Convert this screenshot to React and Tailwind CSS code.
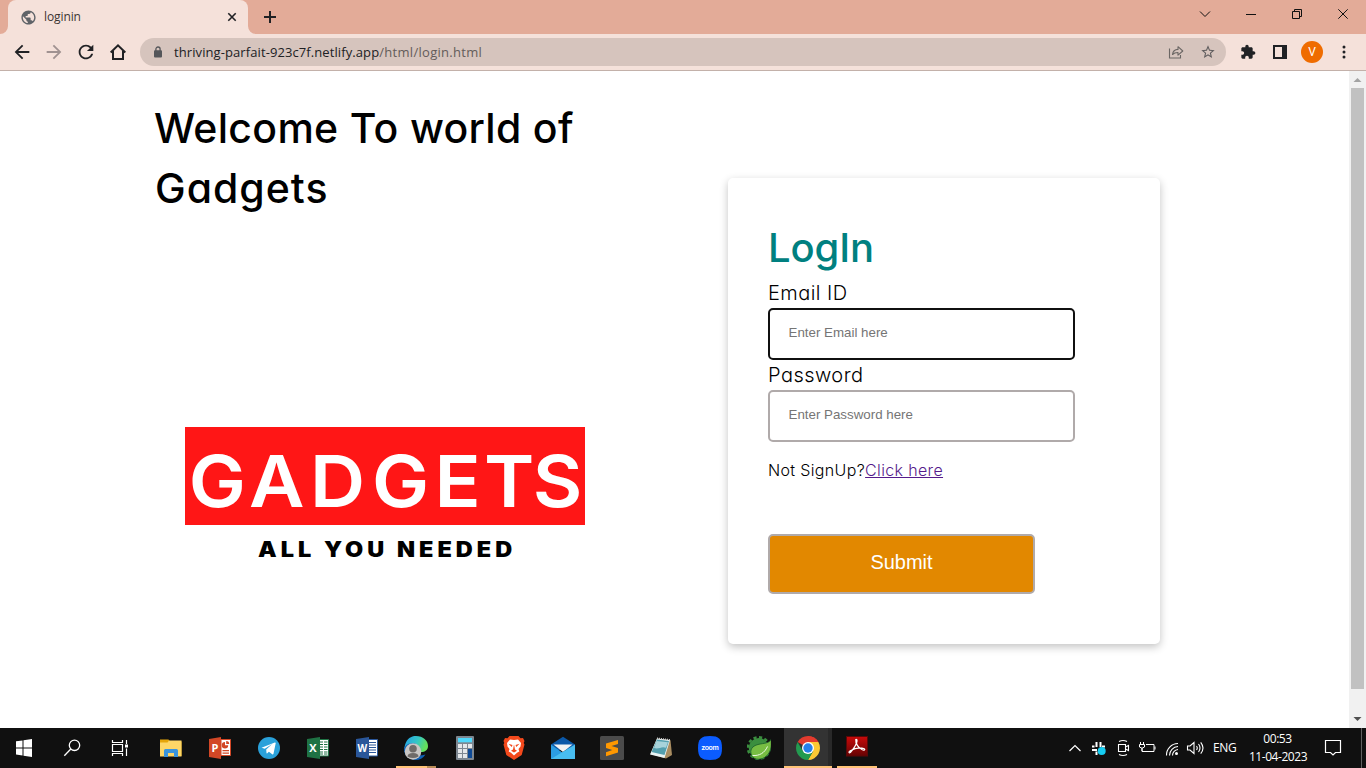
const ui = "font-['Open_Sans','Noto_Sans',sans-serif]";
const geo = "font-['Inter',sans-serif] [font-feature-settings:'cv11']";

function Glyph({ d, size, color = '#202124' }) {
  return (
    <svg width={size} height={size} viewBox="0 0 24 24" fill={color} className="shrink-0">
      <path d={d} />
    </svg>
  );
}

const BACK = 'M20 11H7.83l5.59-5.59L12 4l-8 8 8 8 1.41-1.41L7.83 13H20v-2z';
const FORWARD = 'M4 11h12.17l-5.59-5.59L12 4l8 8-8 8-1.41-1.41L16.17 13H4v-2z';
const RELOAD =
  'M17.65 6.35C16.2 4.9 14.21 4 12 4c-4.42 0-7.99 3.58-7.99 8s3.57 8 7.99 8c3.73 0 6.84-2.55 7.73-6h-2.08c-.82 2.33-3.04 4-5.65 4-3.31 0-6-2.69-6-6s2.69-6 6-6c1.66 0 3.14.69 4.22 1.78L13 11h7V4l-2.35 2.35z';
const PUZZLE =
  'M20.5 11H19V7c0-1.1-.9-2-2-2h-4V3.5C13 2.12 11.88 1 10.5 1S8 2.12 8 3.5V5H4c-1.1 0-1.99.9-1.99 2v3.8H3.5c1.49 0 2.7 1.21 2.7 2.7s-1.21 2.7-2.7 2.7H2V20c0 1.1.9 2 2 2h3.8v-1.5c0-1.49 1.21-2.7 2.7-2.7 1.49 0 2.7 1.21 2.7 2.7V22H17c1.1 0 2-.9 2-2v-4h1.5c1.38 0 2.5-1.12 2.5-2.5S21.88 11 20.5 11z';
const STAR =
  'M22 9.24l-7.19-.62L12 2 9.19 8.63 2 9.24l5.46 4.73L5.82 21 12 17.27 18.18 21l-1.63-7.03L22 9.24zM12 15.4l-3.76 2.27 1-4.28-3.32-2.88 4.38-.38L12 6.1l1.71 4.04 4.38.38-3.32 2.88 1 4.28L12 15.4z';
const GLOBE =
  'M12 2C6.48 2 2 6.48 2 12s4.48 10 10 10 10-4.48 10-10S17.52 2 12 2zm-1 17.93c-3.95-.49-7-3.85-7-7.93 0-.62.08-1.21.21-1.79L9 15v1c0 1.1.9 2 2 2v1.93zm6.9-2.54c-.26-.81-1-1.39-1.9-1.39h-1v-3c0-.55-.45-1-1-1H8v-2h2c.55 0 1-.45 1-1V7h2c1.1 0 2-.9 2-2v-.41c2.93 1.19 5 4.06 5 7.41 0 2.08-.8 3.97-2.1 5.39z';

function Cell({ children, className = '' }) {
  return <div className={`flex w-8 shrink-0 items-center justify-center ${className}`}>{children}</div>;
}

function TabStrip() {
  return (
    <div className="flex h-[34px] bg-[#e3ab98]">
      <svg width="8" height="34" viewBox="0 0 8 34" className="shrink-0">
        <path d="M8 26a8 8 0 0 1-8 8h8z" fill="#f5e1da" />
      </svg>
      <div className="flex h-[34px] w-60 shrink-0 items-center rounded-t-lg bg-[#f5e1da] pl-3">
        <Glyph d={GLOBE} size={17} color="#5f6368" />
        <span className={`${ui} ml-[7px] w-[178px] text-[12px] tracking-[-0.1px] text-[#3c3533]`}>loginin</span>
        <svg width="20" height="20" viewBox="0 0 20 20" className="shrink-0">
          <path d="M6.3 6.3l7.4 7.4M13.7 6.3l-7.4 7.4" stroke="#202124" strokeWidth="1.6" />
        </svg>
      </div>
      <svg width="8" height="34" viewBox="0 0 8 34" className="shrink-0">
        <path d="M0 26a8 8 0 0 0 8 8h-8z" fill="#f5e1da" />
      </svg>
      <svg width="28" height="34" viewBox="0 0 28 34" className="shrink-0">
        <path d="M8 17h12M14 11v12" stroke="#202124" strokeWidth="2" />
      </svg>
      <div className="flex-1" />
      <svg width="184" height="28" viewBox="1182 0 184 28" className="shrink-0" fill="none" stroke="#111">
        <path d="M1200 11.5l5 5 5-5" />
        <path d="M1246 14.5h10" />
        <path d="M1292.5 11.5h7v7h-7zM1294.5 11v-1.500h7v7h-2" />
        <path d="M1338.300 9.300l9.400 9.400M1347.700 9.300l-9.400 9.400" />
      </svg>
    </div>
  );
}

function Toolbar() {
  return (
    <div className="flex h-[37px] items-center border-b border-[#c3b1aa] bg-[#f5e1da] pl-1.5">
      <Cell><Glyph d={BACK} size={22} /></Cell>
      <Cell><Glyph d={FORWARD} size={22} color="#a09291" /></Cell>
      <Cell><Glyph d={RELOAD} size={22} /></Cell>
      <Cell>
        <svg width="18" height="18" viewBox="0 0 18 18" fill="none" stroke="#202124" strokeWidth="2">
          <path d="M1.700 9.500L9 2.300l7.300 7.200M4 8v8h10V8" />
        </svg>
      </Cell>
      <div className="ml-1.5 mr-1.5 flex h-7 flex-1 items-center rounded-full bg-[#d6c4bd] pl-[13px] pr-0.5">
        <svg width="10" height="12" viewBox="0 0 10 12" className="shrink-0">
          <rect x="1" y="4.200" width="8" height="7.300" rx="1" fill="#54565a" />
          <path d="M2.900 5V3.100a2.100 2.100 0 0 1 4.200 0V5" fill="none" stroke="#54565a" strokeWidth="1.300" />
        </svg>
        <span className={`${ui} ml-[11px] flex-1 whitespace-nowrap pt-px text-[13px] tracking-[0.09px] text-[#202124]`}>
          thriving-parfait-923c7f.netlify.app<span className="tracking-[0.3px] text-[#645c5a]">/html/login.html</span>
        </span>
        <Cell>
          <svg width="16" height="16" viewBox="0 0 16 16" fill="none" stroke="#6b6664" strokeWidth="1.100">
            <path d="M1.500 4.500v9.500h11v-3" />
            <path d="M4.500 10.500c.4-3.500 2.300-5 5.500-5.100V2.700l4.800 4.300-4.800 4.200V8.500c-2.500-.1-4 .5-5.500 2z" strokeLinejoin="round" />
          </svg>
        </Cell>
        <Cell><Glyph d={STAR} size={16} color="#5f5c5d" /></Cell>
      </div>
      <Cell><Glyph d={PUZZLE} size={16} /></Cell>
      <Cell>
        <svg width="14" height="14" viewBox="0 0 14 14">
          <path fillRule="evenodd" fill="#202124" d="M0 0h14v14H0zM2 2v10h7V2z" />
        </svg>
      </Cell>
      <Cell>
        <div className="flex size-[22px] items-center justify-center rounded-full bg-[#ef6c00] font-['Roboto',sans-serif] text-[12px] text-white">V</div>
      </Cell>
      <Cell className="mr-1.5">
        <svg width="4" height="14" viewBox="0 0 4 14" fill="#202124">
          <circle cx="2" cy="2" r="1.500" /><circle cx="2" cy="7" r="1.500" /><circle cx="2" cy="12" r="1.500" />
        </svg>
      </Cell>
    </div>
  );
}

function Scrollbar() {
  return (
    <div className="flex w-[17px] shrink-0 flex-col items-center bg-[#f1f1f1]">
      <svg width="17" height="17" viewBox="0 0 17 17"><path d="M8.500 7l4 4h-8z" fill="#a3a3a3" /></svg>
      <div className="w-[13px] flex-1 bg-[#c1c1c1]" />
      <div className="h-[22px]" />
      <svg width="17" height="17" viewBox="0 0 17 17"><path d="M4.500 6h8l-4 4z" fill="#505050" /></svg>
    </div>
  );
}

function Brand() {
  return (
    <svg width="400" height="150" viewBox="185 427 400 150" className="ml-[30px]">
      <rect x="185" y="427" width="400" height="98" fill="#ff1616" />
      <g transform="translate(185 507) scale(1.060 1)">
        <text x="3.500 60.500 118 176.500 235.500 282 328" y="0" fontFamily="Inter, sans-serif" fontWeight="600" fontSize="72" fill="#fff">GADGETS</text>
      </g>
      <g transform="translate(258 557) scale(1.120 1)">
        <text fontFamily="Inter, sans-serif" fontWeight="900" fontSize="21" textLength="227" fill="#000">ALL YOU NEEDED</text>
      </g>
    </svg>
  );
}

function Field({ label, placeholder, type, border }) {
  return (
    <label className="block">
      <span className="block h-[30px] text-[20px] font-light leading-[30px] tracking-[0.45px]">{label}</span>
      <input
        type={type}
        placeholder={placeholder}
        className={`block h-[52px] w-[307px] rounded-[5px] border-2 bg-white pb-[3px] pl-[18.5px] font-['Liberation_Sans',Arial,sans-serif] text-[13.333px] outline-none placeholder:text-[#757575] ${border}`}
      />
    </label>
  );
}

function LoginPage() {
  return (
    <div className={`${geo} flex min-w-0 flex-1 bg-white text-black`}>
      <section className="ml-[155px] w-[573px] shrink-0 pt-[27px]">
        <h1 className="w-[460px] -indent-px text-[41px] font-medium leading-[60px] tracking-[0.3px]">
          Welcome To world of<br /><span className="tracking-[1px]">Gadgets</span>
        </h1>
        <div className="mt-[209px]">
          <Brand />
        </div>
      </section>
      <section className="mt-[107px] h-[466px] w-[432px] rounded-[5px] bg-white p-10 shadow-[0_3px_8px_rgba(0,0,0,0.24)]">
        <h2 className="text-[40px] font-medium leading-[60px] tracking-[-0.1px] text-[#008080]">LogIn</h2>
        <Field label="Email ID" type="email" placeholder="Enter Email here" border="border-[#101010]" />
        <Field label="Password" type="password" placeholder="Enter Password here" border="border-[#b0aaaa]" />
        <p className="mt-4 text-[16px] font-light leading-6 tracking-[0.35px]">
          Not SignUp?<a className="text-[#551a8b] underline" href="#signup">Click here</a>
        </p>
        <button className="mt-[52px] block h-[60px] w-[267px] rounded-[5px] border-2 border-[#b0aaaa] bg-[#e28800] pb-1 font-['Liberation_Sans',Arial,sans-serif] text-[20px] text-white">
          Submit
        </button>
      </section>
    </div>
  );
}

const icons = {
  start: (
    <g fill="#fff"><path d="M4 5.300l6.500-.9v7H4zM11.500 4.200L20 3v8.400h-8.500zM4 12.500h6.500v7L4 18.600zM11.500 12.500H20V21l-8.500-1.200z" /></g>
  ),
  search: (
    <g fill="none" stroke="#fff" strokeWidth="1.300"><circle cx="14.500" cy="9.300" r="5.200" /><path d="M10.800 13L4.300 19.800" /></g>
  ),
  view: (
    <g fill="none" stroke="#fff" strokeWidth="1.200">
      <path d="M4.500 4v2.500h10V4M4.500 20v-2.500h10V20M4.500 8.500h10v7h-10zM18.500 4v4M18.500 12.500V20" /><path d="M17 8.500h3v3h-3z" fill="#fff" stroke="none" />
    </g>
  ),
  folder: (
    <g>
      <path d="M1 3.500h8.500l1.500 2H22.500V20H1z" fill="#e5a50a" /><path d="M1 6.500h7.500l1.500-2h12.500V20.500H1z" fill="#fdd667" />
      <path d="M5 21v-6.500q0-1.500 1.500-1.500h11q1.500 0 1.500 1.500V21h-4v-4H9v4z" fill="#3a94dc" />
    </g>
  ),
  ppt: (
    <g>
      <path d="M13 3.500h9.500v16H13z" fill="#fff" stroke="#d24726" /><path d="M13 1L1 3v18l12 2z" fill="#d24726" />
      <path d="M17 6a3.200 3.200 0 1 0 3.200 3.200H17zM18.200 5v3h3a3 3 0 0 0-3-3zM14.500 14h6.500v1.200h-6.500zM14.500 16.500h6.500v1.200h-6.500z" fill="#d24726" />
      <text x="3.600" y="16.300" fontFamily="Open Sans, sans-serif" fontWeight="700" fontSize="11" fill="#fff">P</text>
    </g>
  ),
  telegram: (
    <g><circle cx="12" cy="12" r="11" fill="#2aa1da" /><path d="M4.500 11.700L17.800 6.500c.6-.2 1 .2.900.8l-2.200 10.400c-.2.700-.7.900-1.300.5l-3.300-2.400-1.600 1.500c-.4.400-.8.200-.8-.3l-.3-3.400 6-5.500-7.400 4.700-3.200-1c-.6-.2-.6-.3-.1-.1z" fill="#fff" /></g>
  ),
  excel: (
    <g>
      <path d="M13 3.500h9.500v16.500H13z" fill="#fff" stroke="#1f7244" />
      <path d="M14 6h7.500M14 8.500h7.500M14 11h7.500M14 13.500h7.500M14 16h7.500M14 18h7.500" stroke="#1f7244" /><path d="M17.500 4v15" stroke="#fff" />
      <path d="M14 1L1 3v18l13 2z" fill="#1f7244" />
      <text x="3.300" y="16.300" fontFamily="Open Sans, sans-serif" fontWeight="700" fontSize="11" fill="#fff">X</text>
    </g>
  ),
  word: (
    <g>
      <path d="M13 3.500h9.500v16.500H13z" fill="#fff" stroke="#2a5699" /><path d="M14 6.500h7M14 9h7M14 11.500h7M14 14h7M14 16.500h7" stroke="#2a5699" />
      <path d="M14 1L1 3v18l13 2z" fill="#2a5699" />
      <text x="2.400" y="16.300" fontFamily="Open Sans, sans-serif" fontWeight="700" fontSize="10" fill="#fff">W</text>
    </g>
  ),
  edge: (
    <g>
      <defs>
        <linearGradient id="edgeTop" x1="0" y1="0" x2="1" y2="0.300"><stop offset="0" stopColor="#239de8" /><stop offset="0.600" stopColor="#35c7c5" /><stop offset="1" stopColor="#65e05b" /></linearGradient>
      </defs>
      <path d="M1 9C3 2.500 7 0 12 0c7 0 12 4.500 12 10 0 4-3 6-7 6-3 0-3.500-1-2.500-2.500C16 11 13 8 9 8c-3 0-6 1-9 5z" fill="url(#edgeTop)" />
      <path d="M0 13c1-4 5-6 9-6 1 0 2 .2 3 .600C8 9 7 12 8 15c1.500 4 6 6 13.500 3.500C18 24 12 25 7 23 2 21 0 17 0 13z" fill="#0f5fb4" />
      <circle cx="9" cy="15.500" r="8.300" fill="#c9c6c4" /><circle cx="9" cy="12.800" r="3.800" fill="#6f6b69" />
      <path d="M3.500 20.500q0-3.500 5.500-3.500t5.500 3.500q-5.500 3-11 0z" fill="#6f6b69" />
    </g>
  ),
  calc: (
    <g>
      <rect x="3" y="0" width="18" height="24" rx="1" fill="#7d8791" /><rect x="5" y="2" width="14" height="4.300" fill="#50d8fb" />
      <g fill="#e4e7ea">
        <path d="M5 8h4v4H5zM10 8h4v4h-4zM15 8h4v4h-4zM5 13h4v4H5zM10 13h4v4h-4zM5 18h4v4H5zM10 18h4v4h-4z" />
      </g>
      <path d="M15 13h4v9h-4z" fill="#0e4a96" />
    </g>
  ),
  brave: (
    <g>
      <path d="M7.500 0h9l2 2.300 2.500-.2 1.500 3-.8 2 .8 1.500-2.800 10.400L12 24l-7.700-5L1.500 8.600l.8-1.500-.8-2 1.500-3 2.500.2z" fill="#f4491c" />
      <path d="M12 4l4-.5 3 3.500-.5 3.500-2 2.500.8 2.500-2.300 1.300L12 19.500l-3-2.700-2.300-1.300.8-2.500-2-2.500L5 7l3-3.500z" fill="#fff" />
      <path d="M6.500 7.800l4 1.200-.8 2zM17.500 7.800l-4 1.200.8 2zM12 8.500l1 5 2 1.300-3 1.700-3-1.700 2-1.300z" fill="#f4491c" />
    </g>
  ),
  mail: (
    <g>
      <path d="M0 8.500L12 .8l12 7.700V14H0z" fill="#0b58a8" /><path d="M2.500 8.500h19L12 16z" fill="#f3f3f3" />
      <path d="M0 8.500l14 10V23H0z" fill="#2b9de3" /><path d="M24 8.500V23H0z" fill="#48bdf0" />
    </g>
  ),
  sublime: (
    <g><rect width="24" height="24" rx="1.500" fill="#4b4b4b" /><path d="M6 7.600l12-3.700v4l-6.500 2.200 6.500 2v4.300L6 20.200v-4l6.300-2.200L6 12z" fill="#ff9800" /></g>
  ),
  notepad: (
    <g>
      <path d="M8 2.500l13.500 1.800L23 19l-6 3.500L1.500 18z" fill="#a98d61" /><path d="M8 2.500L21 4l-5.500 18L1 18.500z" fill="#e9f3f4" />
      <path d="M8 3.500L20 5l-4.500 14L2.500 16z" fill="#539fae" /><path d="M7.500 5L19 6.300l-2 5.500c-5-2-7 2-12 .200z" fill="#a7d3da" />
      <path d="M8 2.300l13 1.500" stroke="#c9c9c9" strokeWidth="1.600" strokeDasharray="1 1" />
    </g>
  ),
  zoom: (
    <g><path d="M12 0C21 0 24 3 24 12S21 24 12 24 0 21 0 12 3 0 12 0z" fill="#0b5cff" /><text x="12" y="14" textAnchor="middle" textLength="17.500" fontFamily="Inter, sans-serif" fontWeight="600" fontSize="7" fill="#fff">zoom</text></g>
  ),
  spring: (
    <g>
      <circle cx="11.700" cy="12" r="10" fill="#3b8f3f" /><circle cx="11.700" cy="12" r="10.800" fill="none" stroke="#3b8f3f" strokeWidth="2.400" strokeDasharray="3.200 2.450" />
      <path d="M24 3.500C22 7.500 17 7 11 8.500 5 10 2.500 14 4.500 19c1.500 4.500 8 5.500 13 2.500C24 17.500 25 10 24 3.500z" fill="#77bd43" stroke="#185c2b" strokeWidth="0.800" />
      <path d="M5.500 19.500c7 .5 12-2.500 15-9" fill="none" stroke="#effbe7" />
    </g>
  ),
  chrome: (
    <g>
      <path d="M12 12L1.610 6A12 12 0 0 1 22.390 6z" fill="#e33b2e" /><path d="M12 0a12 12 0 0 1 10.390 6H12z" fill="#e33b2e" />
      <path d="M22.390 6A12 12 0 0 1 12 24l5.200-9L12 6z" fill="#fcc934" /><path d="M1.610 6A12 12 0 0 0 12 24l5.200-9L6.800 15z" fill="#239a50" />
      <circle cx="12" cy="12" r="6" fill="#fff" /><circle cx="12" cy="12" r="4.700" fill="#2680eb" />
    </g>
  ),
  pdf: (
    <g>
      <defs><linearGradient id="pdf" x2="0" y2="1"><stop offset="0" stopColor="#c80a0a" /><stop offset="1" stopColor="#650303" /></linearGradient></defs>
      <rect x="1.500" y="0.500" width="21" height="19.500" fill="url(#pdf)" stroke="#5a0808" />
      <path d="M10.800 3.500c2.500-.8 1.500 5-5.500 13-1.500 1-2-.5 0-1.700 4-2.300 10-3.300 13.500-2.300 2 .8.500 2.200-1.500 1.300-4-2-7-6.500-6.500-10.300z" fill="none" stroke="#fff" strokeWidth="1.200" />
    </g>
  ),
};

function AppSlot({ name, state = 'idle' }) {
  const bar = { idle: '', open: 'mx-1 bg-[#ffc377]', group: 'mx-1 bg-linear-to-r from-[#ffc377] from-78% to-[#ba8d57] to-78%', active: 'bg-[#ffc377]' }[state];
  return (
    <div className={`mr-px flex h-10 w-12 shrink-0 flex-col ${state === 'active' ? 'border-r-4 border-[#292929] bg-[#333333]' : ''}`}>
      <div className="flex h-[38px] items-center justify-center pt-0.5">
        <svg width="24" height="24" viewBox="0 0 24 24" className={state === 'active' ? 'relative left-0.5 shrink-0' : 'shrink-0'}>{icons[name]}</svg>
      </div>
      <div className={`h-0.5 ${state === 'active' ? '-mr-1' : ''} ${bar}`} />
    </div>
  );
}

function Tray() {
  return (
    <div className={`${ui} flex h-10 items-center text-[12px] text-white`}>
      <svg width="142" height="40" viewBox="1064 728 142 40" fill="none" stroke="#fff" className="shrink-0">
        <path d="M1069.500 751l5.500-5.500 5.500 5.500" strokeWidth="1.200" />
        <g strokeWidth="2">
          <path d="M1096.500 742v5M1092 746.500h2.500M1100.500 742v5M1102 746.500h3M1092 750h5M1100 750h5M1096.500 751.500v3.500" />
        </g>
        <circle cx="1101.700" cy="751" r="4" fill="#15cdf2" stroke="none" />
        <path d="M1119 741.500q4-2 8 0M1119 754.500q4 2 8 0M1118.500 744.500h7v7h-7zM1125.500 747l3-1.500v5l-3-1.500" strokeWidth="1.100" />
        <path d="M1146 744.500h8v7h-12v-3M1155 746.500v3M1140.500 742v2.500M1143.500 742v2.500M1139.500 744.500h5v2.500q-2.500 2.500-5 0zM1142 748v3" />
        <g strokeWidth="1.100">
          <path d="M1166.500 755.500a11.500 11.500 0 0 1 11.500-12M1169.500 755.500a9 9 0 0 1 8.500-9M1172.500 755.500a6 6 0 0 1 5.500-6" /><circle cx="1176.500" cy="753.500" r="1.500" fill="#fff" stroke="none" />
        </g>
        <path d="M1187.500 746h2.500l4-3.500v11l-4-3.500h-2.500zM1196.500 746q1.500 2 0 4M1198.500 744q3 4 0 8M1200.700 742.300q4.600 5.700 0 11.400" strokeWidth="1.100" />
      </svg>
      <span className="ml-[7px] w-[35px] tracking-[-0.35px]">ENG</span>
      <div className="w-[60px] whitespace-nowrap text-center text-[12px] leading-[18px] tracking-[-0.45px]">
        <div className="pr-px">00:53</div>
        <div>11-04-2023</div>
      </div>
      <svg width="58" height="40" viewBox="1308 728 58 40" fill="none" stroke="#fff" className="shrink-0">
        <path d="M1325.500 740.500h15v12h-5l-2.500 2.500-2.500-2.500h-5z" strokeWidth="1.200" />
        <path d="M1361.500 728v40" stroke="#606060" />
      </svg>
    </div>
  );
}

function Taskbar() {
  const apps = ['folder', 'ppt', 'telegram', 'excel', 'word', 'edge', 'calc', 'brave', 'mail', 'sublime', 'notepad', 'zoom', 'spring', 'chrome', 'pdf'];
  const states = { edge: 'group', chrome: 'active', pdf: 'open' };
  return (
    <div className="flex h-10 shrink-0 bg-[#101010]">
      {['start', 'search', 'view'].map((n) => (
        <div key={n} className="flex w-12 shrink-0 items-center justify-center">
          <svg width="24" height="24" viewBox="0 0 24 24">{icons[n]}</svg>
        </div>
      ))}
      <div className="ml-[3px] flex flex-1">
        {apps.map((n) => <AppSlot key={n} name={n} state={states[n]} />)}
      </div>
      <Tray />
    </div>
  );
}

export default function App() {
  return (
    <div className="flex h-[768px] w-[1366px] flex-col overflow-hidden bg-white">
      <TabStrip />
      <Toolbar />
      <main className="flex min-h-0 flex-1">
        <LoginPage />
        <Scrollbar />
      </main>
      <Taskbar />
    </div>
  );
}
